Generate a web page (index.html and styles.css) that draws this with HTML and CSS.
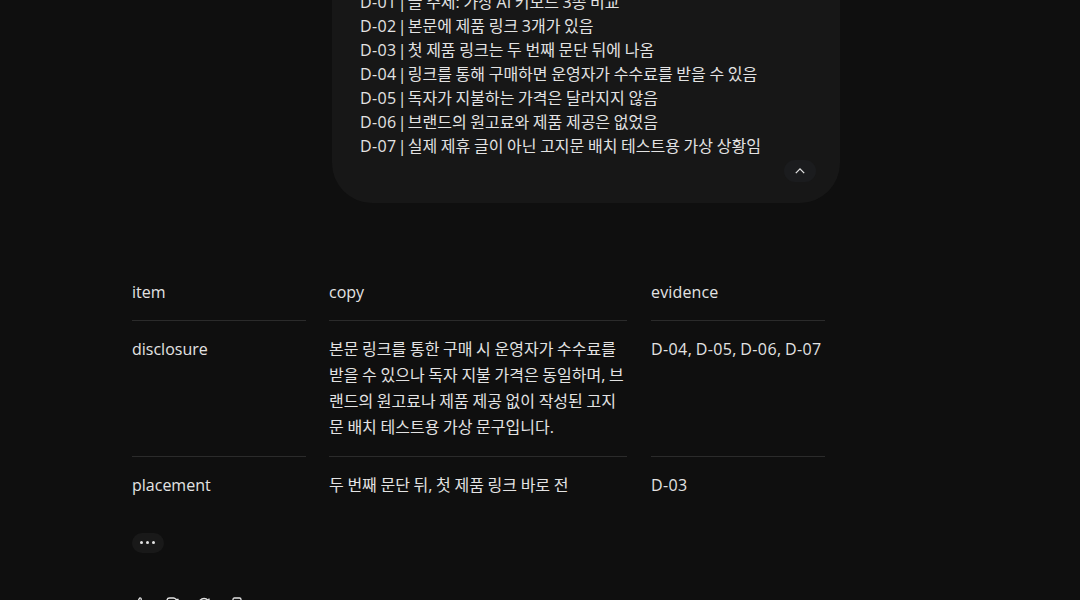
FILE: index.html
```html
<!DOCTYPE html>
<html lang="ko">
<head>
  <meta charset="UTF-8">
  <title>고지문 배치 테스트</title>
  <meta name="viewport" content="width=device-width, initial-scale=1.0">
  <link rel="stylesheet" href="styles.css">
</head>
<body>
  <main class="chat">
    <div class="bubble">
      <p><span class="code">D-01</span> <span class="bar">|</span> 글 주제: 가상 AI 키보드 3종 비교</p>
      <p><span class="code">D-02</span> <span class="bar">|</span> 본문에 제품 링크 3개가 있음</p>
      <p><span class="code">D-03</span> <span class="bar">|</span> 첫 제품 링크는 두 번째 문단 뒤에 나옴</p>
      <p><span class="code">D-04</span> <span class="bar">|</span> 링크를 통해 구매하면 운영자가 수수료를 받을 수 있음</p>
      <p><span class="code">D-05</span> <span class="bar">|</span> 독자가 지불하는 가격은 달라지지 않음</p>
      <p><span class="code">D-06</span> <span class="bar">|</span> 브랜드의 원고료와 제품 제공은 없었음</p>
      <p><span class="code">D-07</span> <span class="bar">|</span> 실제 제휴 글이 아닌 고지문 배치 테스트용 가상 상황임</p>
      <button class="collapse" aria-label="접기">
        <svg width="12" height="12" viewBox="0 0 12 12"><path d="M1.800 8.100 6 3.900l4.200 4.200"/></svg>
      </button>
    </div>

    <div class="table">
      <div class="cell">item</div>
      <div class="cell">copy</div>
      <div class="cell latin">evidence</div>

      <div class="cell">disclosure</div>
      <div class="cell">본문 링크를 통한 구매 시 운영자가 수수료를<br>받을 수 있으나 독자 지불 가격은 동일하며, 브<br>랜드의 원고료나 제품 제공 없이 작성된 고지<br>문 배치 테스트용 가상 문구입니다.</div>
      <div class="cell code">D-04, D-05, D-06, D-07</div>

      <div class="cell last">placement</div>
      <div class="cell last">두 번째 문단 뒤, 첫 제품 링크 바로 전</div>
      <div class="cell last code">D-03</div>
    </div>

    <button class="more" aria-label="더보기"><i></i><i></i><i></i></button>

    <div class="actions">
      <svg width="16" height="16" viewBox="0 0 16 16"><path d="M2 7h2.500L7.300 1.600Q8 .5 8.900 1.300L9.300 2 8.600 6H14l-1.500 8h-8V7M2 7v7h2.500"/></svg>
      <svg width="16" height="16" viewBox="0 0 16 16"><path d="M14 9h-2.500L8.500 15 7.300 10H2L3 3Q3.500 1 5.500 1h4Q11 1 12 2.300L14 2.300V9"/></svg>
      <svg width="16" height="16" viewBox="0 0 16 16"><path d="M3.200 4a6 6 0 1 0 9.800 0Q8-1 3.200 4M13 1.500V5H9.500"/></svg>
      <svg width="16" height="16" viewBox="0 0 16 16"><path d="M5 11V2.500Q5 1 6.500 1h5Q13 1 13 2.500V11ZM5 4H2.500v10H10v-3"/></svg>
    </div>
  </main>
</body>
</html>
```

FILE: styles.css
```css
* {
  box-sizing: border-box;
}
body {
  margin: 0;
  height: 600px;
  overflow: hidden;
  background-color: #0f0f0f;
  color: #e3e3e3;
  font-family: "Open Sans", "Noto Sans CJK KR", sans-serif;
  font-size: 16px;
  word-spacing: -0.5px;
}
button {
  display: flex;
  align-items: center;
  justify-content: center;
  padding: 0;
  border: none;
}
svg {
  fill: none;
  stroke: #e3e3e3;
  stroke-width: 1.3;
}
.chat {
  width: 708px;
  height: 600px;
  margin-left: 132px;
  overflow: hidden;
}
.bubble {
  width: 508px;
  height: 213px;
  margin: -10px 0 0 200px;
  padding: 0 24px 0 28px;
  border-radius: 0 0 40px 40px;
  background-color: #171717;
}
.bubble p {
  margin: 0;
  line-height: 24px;
  white-space: nowrap;
}
.code {
  letter-spacing: 0.4px;
  word-spacing: -1.1px;
}
.bar {
  margin: 0 -2.5px;
}
.latin {
  letter-spacing: 0.15px;
}
.collapse {
  width: 32px;
  height: 22px;
  margin: 2px 0 0 auto;
  border-radius: 11px;
  background-color: #1b1c1e;
}
.table {
  display: grid;
  grid-template-columns: 174px 298px 174px;
  justify-content: start;
  column-gap: 23px;
  margin-top: 76px;
}
.cell {
  padding: 15px 0 16px;
  border-bottom: 1px solid #2b2b2b;
  line-height: 26px;
  white-space: nowrap;
}
.cell:nth-child(3n) {
  margin: 0 -1px 0 1px;
}
.cell:nth-child(-n+3) {
  padding: 0 0 15px;
}
.cell.last {
  border-bottom: none;
}
.more {
  gap: 3px;
  width: 32px;
  height: 20px;
  margin-top: 19px;
  padding: 0 1px 1px 0;
  border-radius: 10px;
  background-color: #191919;
}
.more i {
  width: 3px;
  height: 3px;
  border-radius: 50%;
  background-color: #e3e3e3;
}
.actions {
  display: flex;
  gap: 16px;
  margin: 44px 0 0;
}
```
